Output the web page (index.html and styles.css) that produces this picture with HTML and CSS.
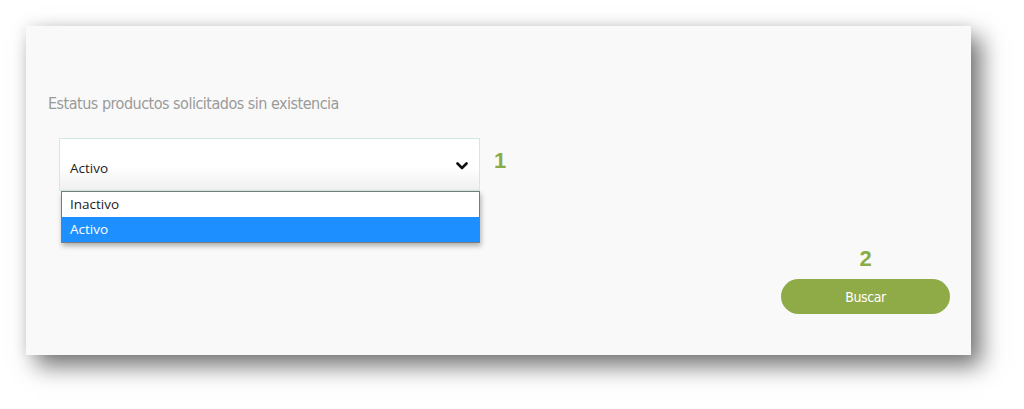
FILE: index.html
```html
<!DOCTYPE html>
<html lang="es">
<head>
<meta charset="utf-8">
<title>Estatus</title>
<link rel="stylesheet" href="styles.css">
</head>
<body>
<div class="panel">
  <label class="field-label">Estatus productos solicitados sin existencia</label>
  <div class="select-row">
    <div class="select-wrap">
      <div class="select">
        <span class="select-value">Activo</span>
        <svg class="chevron" width="12" height="8" viewBox="0 0 12 8"><path d="M1.5 1.5 L6 6 L10.5 1.5" fill="none" stroke="#111" stroke-width="2.6" stroke-linecap="round" stroke-linejoin="round"/></svg>
      </div>
      <ul class="options">
        <li class="option">Inactivo</li>
        <li class="option selected">Activo</li>
      </ul>
    </div>
    <span class="step step-1">1</span>
  </div>
  <div class="actions">
    <div class="action">
      <span class="step">2</span>
      <button class="btn">Buscar</button>
    </div>
  </div>
</div>
</body>
</html>
```

FILE: styles.css
```css
html, body {
  margin: 0;
  padding: 0;
  background: #ffffff;
}
body {
  width: 1024px;
  height: 409px;
  overflow: hidden;
  padding: 26px 0 0 26px;
  box-sizing: border-box;
}
.panel {
  width: 945px;
  height: 329px;
  background: #f9f9f9;
  box-shadow: 10px 11px 22px rgba(0, 0, 0, 0.55), -2px -2px 12px rgba(0, 0, 0, 0.06);
  box-sizing: border-box;
  padding: 68px 21px 0 22px;
  display: flex;
  flex-direction: column;
}
.field-label {
  display: block;
  font-family: "DejaVu Sans", sans-serif;
  font-stretch: condensed;
  font-size: 16px;
  letter-spacing: -0.5px;
  color: #9a9a9a;
  line-height: 20px;
  height: 20px;
}
.select-row {
  display: flex;
  align-items: flex-start;
  margin-top: 24px;
  margin-left: 11px;
}
.select-wrap {
  position: relative;
  width: 421px;
}
.select {
  height: 53px;
  box-sizing: border-box;
  border: 1px solid #cdebe6;
  background: linear-gradient(to bottom, #ffffff 0%, #ffffff 55%, #f0f0f0 100%);
  display: flex;
  align-items: center;
  padding: 6px 11px 0 10px;
  justify-content: space-between;
}
.select-value {
  font-family: "Open Sans", sans-serif;
  font-size: 13.5px;
  color: #222;
}
.chevron {
  margin-top: -4px;
}
.options {
  position: absolute;
  left: 2px;
  top: 53px;
  width: 419px;
  margin: 0;
  padding: 0;
  list-style: none;
  background: #fff;
  border: 1px solid #7b7b7b;
  box-sizing: border-box;
  box-shadow: 1px 3px 5px rgba(0, 0, 0, 0.3);
}
.option {
  height: 25px;
  line-height: 25px;
  padding-left: 8px;
  font-family: "Open Sans", sans-serif;
  font-size: 13.5px;
  color: #222;
}
.option.selected {
  background: #1e8fff;
  color: #fff;
}
.step {
  font-family: "Liberation Sans", Arial, sans-serif;
  font-weight: bold;
  font-size: 22px;
  color: #8aab46;
  line-height: 24px;
}
.step-1 {
  margin-left: 14px;
  margin-top: 11px;
}
.actions {
  display: flex;
  justify-content: flex-end;
  margin-top: 56px;
}
.action {
  display: flex;
  flex-direction: column;
  align-items: center;
  gap: 8px;
}
.btn {
  width: 169px;
  height: 35px;
  border: none;
  border-radius: 18px;
  background: #8fab48;
  color: #fff;
  font-family: "DejaVu Sans", sans-serif;
  font-stretch: condensed;
  font-size: 14px;
  letter-spacing: -0.4px;
  padding: 0;
}
```
